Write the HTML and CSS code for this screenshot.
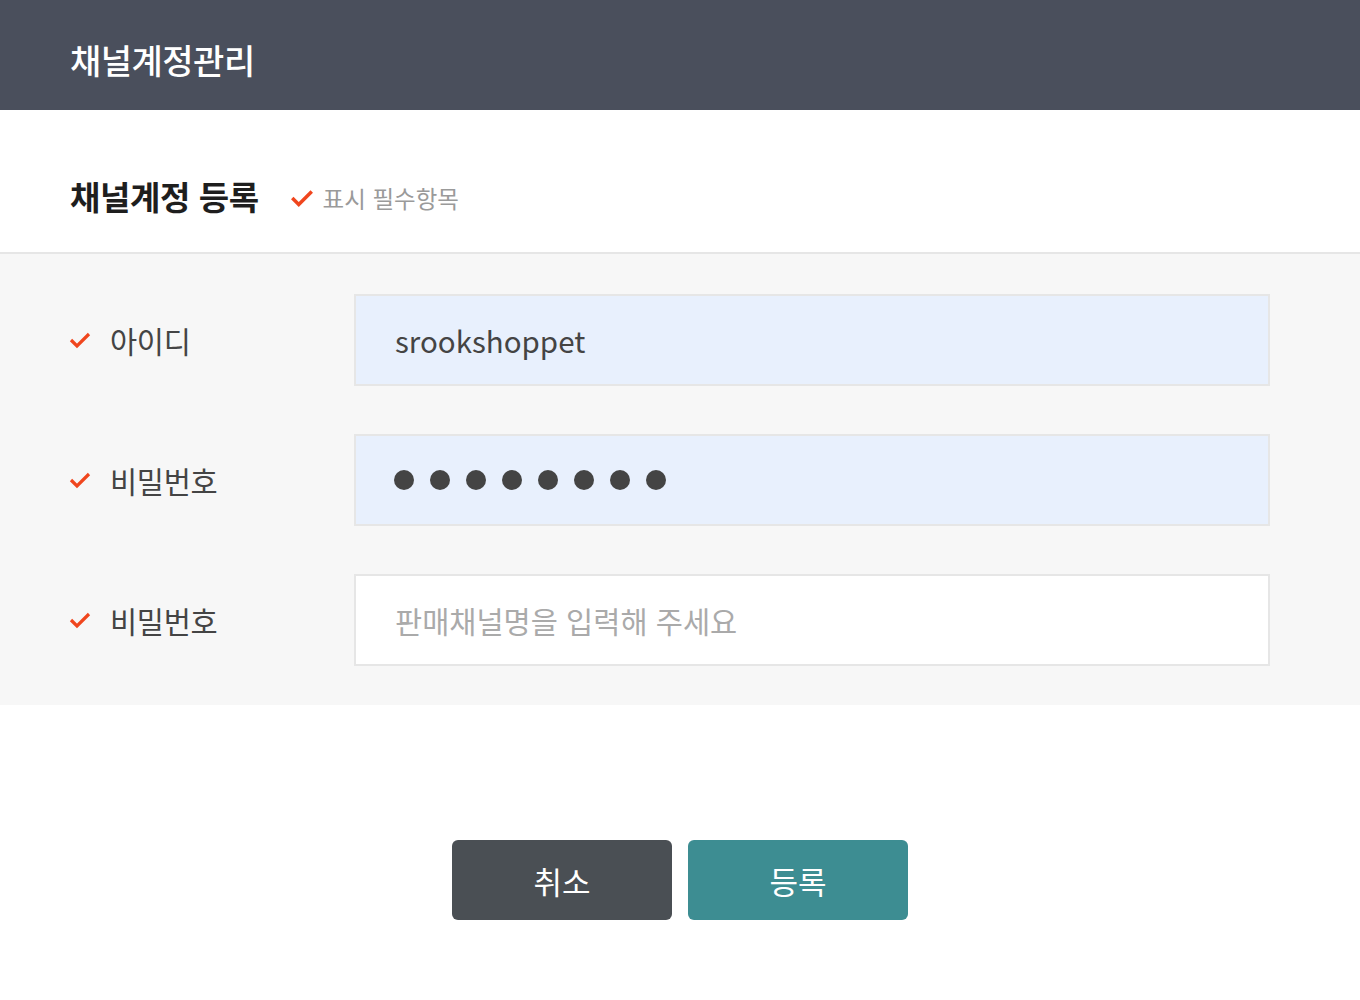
FILE: index.html
```html
<!DOCTYPE html>
<html lang="ko">
<head>
  <meta charset="UTF-8" />
  <title>채널계정관리</title>
  <link rel="stylesheet" href="styles.css">
</head>
<body>
  <header class="topbar">
    <h1>채널계정관리</h1>
  </header>

  <div class="section-head">
    <h2>채널계정 등록</h2>
    <span class="required-note">
      <svg class="check" viewBox="0 0 24 24"><polyline points="3,12 9,18 21,6" /></svg>
      표시 필수항목
    </span>
  </div>

  <form class="form-area">
    <!-- 아이디 -->
    <div class="row">
      <label class="label">
        <svg class="check" viewBox="0 0 24 24"><polyline points="3,12 9,18 21,6" /></svg>
        아이디
      </label>
      <div class="field filled">srookshoppet</div>
    </div>

    <!-- 비밀번호 -->
    <div class="row">
      <label class="label">
        <svg class="check" viewBox="0 0 24 24"><polyline points="3,12 9,18 21,6" /></svg>
        비밀번호
      </label>
      <div class="field filled">
        <span class="dots">
          <i></i><i></i><i></i><i></i><i></i><i></i><i></i><i></i>
        </span>
      </div>
    </div>

    <!-- 판매채널명 -->
    <div class="row">
      <label class="label">
        <svg class="check" viewBox="0 0 24 24"><polyline points="3,12 9,18 21,6" /></svg>
        비밀번호
      </label>
      <div class="field placeholder">판매채널명을 입력해 주세요</div>
    </div>
  </form>

  <div class="actions">
    <button type="button" class="btn cancel">취소</button>
    <button type="button" class="btn submit">등록</button>
  </div>
</body>
</html>
```

FILE: styles.css
```css
body {
  margin: 0;
  font-family: "Noto Sans CJK KR", "Noto Sans", sans-serif;
  background: #fff;
  color: #222;
}
.topbar {
  height: 110px;
  box-sizing: border-box;
  background: #4a4f5c;
  display: flex;
  align-items: center;
  padding-left: 70px;
  padding-top: 8px;
}
.topbar h1 {
  margin: 0;
  color: #fff;
  font-size: 34px;
  font-weight: 500;
  letter-spacing: -0.5px;
}
.section-head {
  height: 144px;
  display: flex;
  align-items: center;
  padding-left: 70px;
  padding-top: 30px;
  box-sizing: border-box;
  border-bottom: 2px solid #e6e6e6;
}
.section-head h2 {
  margin: 0;
  font-size: 33px;
  font-weight: 700;
  color: #1e1e1e;
  letter-spacing: -0.4px;
}
.required-note {
  display: flex;
  align-items: center;
  margin-left: 30px;
  margin-top: 4px;
  font-size: 23.5px;
  color: #9a9a9a;
}
.required-note .check {
  width: 26px;
  height: 26px;
  margin-right: 8px;
}
.check {
  width: 24px;
  height: 24px;
  fill: none;
  stroke: #f0461e;
  stroke-width: 3.2;
  stroke-linecap: butt;
  stroke-linejoin: miter;
}
.form-area {
  background: #f7f7f7;
  padding: 40px 90px 39px 68px;
  display: flex;
  flex-direction: column;
  gap: 48px;
}
.row {
  display: flex;
  align-items: center;
}
.label {
  width: 286px;
  display: flex;
  align-items: center;
  gap: 18px;
  font-size: 29.5px;
  color: #444;
  letter-spacing: -0.3px;
}
.field {
  flex: 1;
  height: 92px;
  box-sizing: border-box;
  border: 2px solid #e6e6e6;
  padding-left: 39px;
  display: flex;
  align-items: center;
  font-size: 29.5px;
}
.filled {
  background: #e8f0fd;
  color: #444;
}
.placeholder {
  background: #fff;
  color: #aaa;
}
.dots {
  display: flex;
  gap: 16px;
  margin-left: -1px;
}
.dots i {
  width: 20px;
  height: 20px;
  border-radius: 50%;
  background: #444;
}
.actions {
  display: flex;
  justify-content: center;
  gap: 16px;
  padding-top: 135px;
}
.btn {
  width: 220px;
  height: 80px;
  border: none;
  border-radius: 6px;
  color: #fff;
  font-family: inherit;
  font-size: 31px;
  font-weight: 400;
  cursor: pointer;
}
.cancel {
  background: #4a4f54;
}
.submit {
  background: #3d8d92;
}
```
